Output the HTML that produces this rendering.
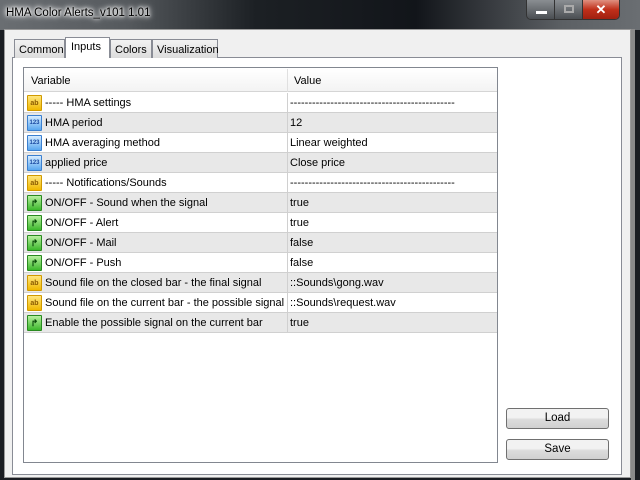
<!DOCTYPE html>
<html><head><style>
*{margin:0;padding:0;box-sizing:border-box}
body{width:640px;height:480px;overflow:hidden;background:#1a1d22;font-family:"Liberation Sans",sans-serif;font-size:11px;color:#000;position:relative}
.title{position:absolute;left:0;top:0;width:640px;height:30px;background:linear-gradient(90deg,#6a6e72 0,#55595d 20%,#1c2024 40%,#12151a 65%,#5c6064 88%,#6a6e72 100%)}
.ttext{position:absolute;left:6px;top:7px;font-size:11.5px;color:#000;text-shadow:0 0 8px #fff,0 0 6px #fff,0 0 4px #fff,0 0 2px #fff}
.btns{position:absolute;left:526px;top:0;width:94px;height:20px;border:1px solid #333;border-top:none;border-radius:0 0 5px 5px;overflow:hidden;display:flex}
.b1,.b2{width:28px;background:linear-gradient(#8a8e92,#4a4e52);border-right:1px solid #333;position:relative}
.b3{flex:1;background:linear-gradient(#e09080,#c0301a 50%,#a02010);position:relative}
.client{position:absolute;left:4px;top:29px;width:627px;height:449px;background:#f0f0f0;border:1px solid #9a9a9a}
.rs{position:absolute;left:631px;top:29px;width:4px;height:451px;background:#8a8a8a}
.panel{position:absolute;left:12px;top:57px;width:610px;height:418px;background:#fff;border:1px solid #898c95}
.tab{position:absolute;top:39px;height:19px;border:1px solid #898c95;border-bottom:none;background:linear-gradient(#f2f2f2,#dcdcdc);padding:4px 0 0 4px;white-space:nowrap}
.list{position:absolute;left:23px;top:67px;width:475px;height:396px;border:1px solid #828790;background:#fff}
.hdr{position:absolute;left:0;top:1px;width:473px;height:23px;background:linear-gradient(#fff,#f3f3f3);border-bottom:1px solid #d5d5d5}
.hdr span{position:absolute;top:6px}
.row{position:absolute;left:0;width:473px;height:20px;border-bottom:1px solid #d0d0d0}
.row.g{background:#e8e8e8}
.row .n{position:absolute;left:21px;top:4px;white-space:nowrap}
.row .v{position:absolute;left:266px;top:4px;white-space:nowrap}
.row .d{position:absolute;left:263px;top:0;width:1px;height:20px;background:#d0d0d0}
.ic{position:absolute;left:3px;top:2px;width:15px;height:16px;border-radius:1px;font-size:7px;font-weight:bold;text-align:center;line-height:15px}
.ab{background:linear-gradient(#ffe680,#f0b800);border:1px solid #d09a00;color:#8a5a00}
.n1{background:linear-gradient(#d8ecff,#5aa8f0);border:1px solid #3b80d0;color:#1a4aa0;font-size:6px}
.bo{background:linear-gradient(#b8f0a0,#3cb82c);border:1px solid #2a8a20;color:#0a4a0a;font-size:9px}
.btn{position:absolute;left:506px;width:103px;height:21px;border:1px solid #707070;border-radius:3px;background:linear-gradient(#f2f2f2 45%,#dcdcdc 55%,#d0d0d0);text-align:center;line-height:19px;font-size:11.5px}
</style></head><body>
<div class="title"><div class="ttext">HMA Color Alerts_v101 1.01</div>
<div class="btns"><div class="b1"><div style="position:absolute;left:9px;top:11px;width:11px;height:3px;background:#fff"></div></div><div class="b2"><div style="position:absolute;left:9px;top:5px;width:10px;height:8px;border:2px solid #aaa"></div></div><div class="b3"><div style="position:absolute;left:0;right:0;top:2px;text-align:center;color:#fff;font-weight:bold;font-size:13px">✕</div></div></div>
</div>
<div class="client"></div>
<div class="rs"></div>
<div class="panel"></div>
<div class="tab" style="left:14px;width:51px">Common</div>
<div class="tab" style="left:110px;width:42px">Colors</div>
<div class="tab" style="left:152px;width:66px">Visualization</div>
<div class="tab" style="left:65px;top:37px;height:21px;width:45px;background:#fff;padding-top:3px;padding-left:5px">Inputs</div>
<div class="list">
<div class="hdr"><span style="left:7px">Variable</span><span style="left:270px">Value</span><div style="position:absolute;left:263px;top:0;width:1px;height:23px;background:#e0e0e0"></div></div>
<div class="row" style="top:25px"><div class="ic ab">ab</div><span class="n">----- HMA settings</span><div class="d"></div><span class="v">---------------------------------------------</span></div>
<div class="row g" style="top:45px"><div class="ic n1">123</div><span class="n">HMA period</span><div class="d"></div><span class="v">12</span></div>
<div class="row" style="top:65px"><div class="ic n1">123</div><span class="n">HMA averaging method</span><div class="d"></div><span class="v">Linear weighted</span></div>
<div class="row g" style="top:85px"><div class="ic n1">123</div><span class="n">applied price</span><div class="d"></div><span class="v">Close price</span></div>
<div class="row" style="top:105px"><div class="ic ab">ab</div><span class="n">----- Notifications/Sounds</span><div class="d"></div><span class="v">---------------------------------------------</span></div>
<div class="row g" style="top:125px"><div class="ic bo">↱</div><span class="n">ON/OFF - Sound when the signal</span><div class="d"></div><span class="v">true</span></div>
<div class="row" style="top:145px"><div class="ic bo">↱</div><span class="n">ON/OFF - Alert</span><div class="d"></div><span class="v">true</span></div>
<div class="row g" style="top:165px"><div class="ic bo">↱</div><span class="n">ON/OFF - Mail</span><div class="d"></div><span class="v">false</span></div>
<div class="row" style="top:185px"><div class="ic bo">↱</div><span class="n">ON/OFF - Push</span><div class="d"></div><span class="v">false</span></div>
<div class="row g" style="top:205px"><div class="ic ab">ab</div><span class="n">Sound file on the closed bar - the final signal</span><div class="d"></div><span class="v">::Sounds\gong.wav</span></div>
<div class="row" style="top:225px"><div class="ic ab">ab</div><span class="n">Sound file on the current bar - the possible signal</span><div class="d"></div><span class="v">::Sounds\request.wav</span></div>
<div class="row g" style="top:245px"><div class="ic bo">↱</div><span class="n">Enable the possible signal on the current bar</span><div class="d"></div><span class="v">true</span></div>
</div>
<div class="btn" style="top:408px">Load</div>
<div class="btn" style="top:439px">Save</div>
</body></html>
